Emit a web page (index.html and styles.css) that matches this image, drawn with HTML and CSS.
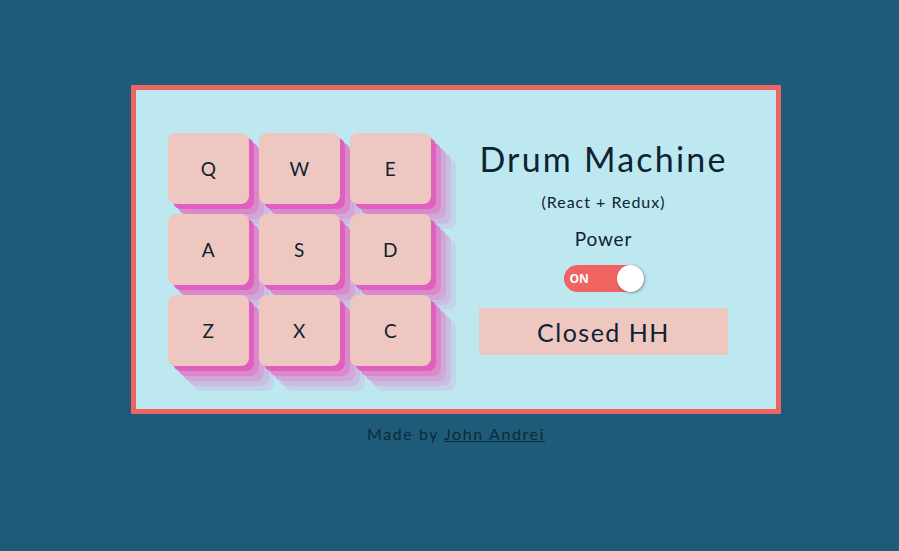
FILE: index.html
```html
<!DOCTYPE html>
<html>
<head>
<meta charset="utf-8">
<link rel="stylesheet" href="styles.css">
</head>
<body>
<div class="page">
  <div class="machine">
    <div class="pads">
      <div class="pad">Q</div>
      <div class="pad">W</div>
      <div class="pad">E</div>
      <div class="pad">A</div>
      <div class="pad">S</div>
      <div class="pad">D</div>
      <div class="pad">Z</div>
      <div class="pad">X</div>
      <div class="pad">C</div>
    </div>
    <div class="panel">
      <h1 class="title">Drum Machine</h1>
      <p class="sub">(React + Redux)</p>
      <p class="power">Power</p>
      <div class="toggle"><span class="on">ON</span><span class="knob"></span></div>
      <div class="display">Closed HH</div>
    </div>
  </div>
  <p class="footer">Made by <a href="#" class="link">John Andrei</a></p>
</div>
</body>
</html>
```
FILE: styles.css
```css
html, body {
  margin: 0;
  padding: 0;
  background: #1e5b78;
  font-family: "Lato", "DejaVu Sans", sans-serif;
  color: #0d2233;
}
.page {
  display: flex;
  flex-direction: column;
  align-items: center;
  padding: 85px 0 0 13px;
}
.machine {
  box-sizing: border-box;
  width: 650px;
  height: 329px;
  border: 5px solid #ef6461;
  background: #bde8ef;
  display: flex;
  padding: 43px 0 0 32px;
}
.pads {
  display: grid;
  grid-template-columns: repeat(3, 81px);
  grid-auto-rows: 71px;
  gap: 10px;
}
.pad {
  background: #eec8c0;
  border-radius: 8px;
  display: flex;
  align-items: center;
  justify-content: center;
  font-size: 19px;
  letter-spacing: 0.5px;
  box-shadow:
    5px 5px 0 #e05fbf,
    10px 10px 0 #d98acb,
    15px 15px 0 #d2a6d8,
    20px 20px 0 #cabde2,
    25px 25px 0 #c3d3ea;
}
.panel {
  width: 249px;
  margin-left: 48px;
  display: flex;
  flex-direction: column;
  align-items: center;
}
.title {
  margin: 6px 0 0;
  font-size: 34px;
  font-weight: 400;
  letter-spacing: 2.2px;
  line-height: 40px;
}
.sub {
  margin: 13px 0 0;
  font-size: 16px;
  letter-spacing: 1px;
  line-height: 20px;
}
.power {
  margin: 15px 0 0;
  font-size: 19px;
  letter-spacing: 0.8px;
  line-height: 24px;
}
.toggle {
  margin-top: 14px;
  width: 80px;
  height: 27px;
  border-radius: 14px;
  background: #ef6461;
  display: flex;
  align-items: center;
  justify-content: space-between;
  box-sizing: border-box;
  padding-left: 6px;
}
.on {
  color: #fff;
  font-weight: 700;
  font-size: 12px;
  font-family: "Open Sans", sans-serif;
}
.knob {
  width: 27px;
  height: 27px;
  border-radius: 50%;
  background: #fff;
  box-shadow: 1px 1px 3px rgba(0,0,0,0.35);
}
.display {
  margin-top: 16px;
  width: 249px;
  height: 47px;
  background: #eec8c0;
  display: flex;
  align-items: center;
  justify-content: center;
  font-size: 25px;
  letter-spacing: 1.5px;
}
.footer {
  margin: 10px 0 0;
  font-size: 16px;
  letter-spacing: 1.6px;
  line-height: 20px;
  color: #0f2a3b;
}
.link {
  color: #0f2a3b;
}
```
